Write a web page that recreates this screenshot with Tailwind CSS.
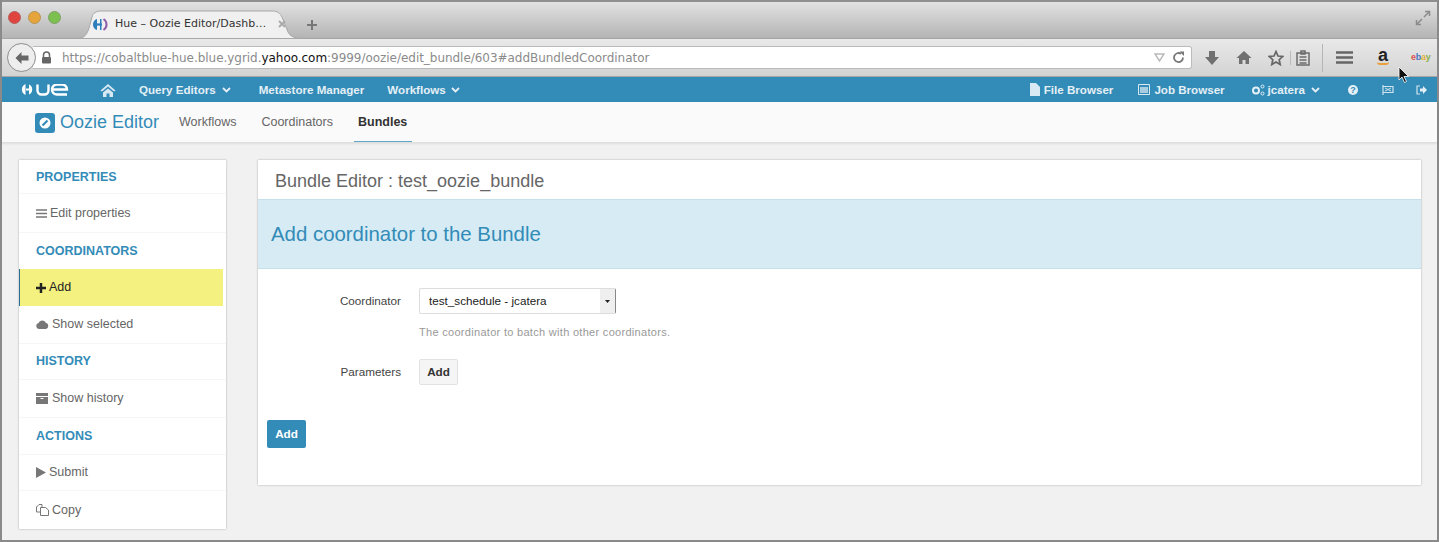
<!DOCTYPE html>
<html lang="en">
<head>
  <meta charset="UTF-8" />
  <title>Hue - Oozie Editor</title>
  <script src="https://cdn.jsdelivr.net/npm/@tailwindcss/browser@4"></script>
</head>
<body class="w-[1439px] h-[542px] overflow-hidden relative bg-[#f1f1f1] font-['Liberation_Sans',sans-serif] text-[#666]">
  <div class="h-full flex flex-col border-x-2 border-b-2 border-[#8a8a8a]">

    <!-- browser tab strip -->
    <div class="h-[38px] shrink-0 flex items-end border-t-2 border-[#8f8f8f] bg-gradient-to-b from-[#e2e2e2] to-[#b4b4b4] relative pl-[6px]">
      <div class="flex gap-[7px] h-[36px] pt-[9px] w-[76px]">
        <span class="w-[13px] h-[13px] rounded-full bg-[#e0443e] border border-[#b5605c]"></span>
        <span class="w-[13px] h-[13px] rounded-full bg-[#e5a53a] border border-[#b89455]"></span>
        <span class="w-[13px] h-[13px] rounded-full bg-[#7cc04f] border border-[#7f9f66]"></span>
      </div>
      <div class="h-[28px] w-[216px] -ml-[1px] relative flex items-center pl-[9px] gap-[7px] font-['DejaVu_Sans',sans-serif] text-[#333]">
        <svg width="228" height="29" viewBox="0 0 228 29" class="absolute -left-[6px] top-0"><path d="M0 28.500C8 28.500 10 24 12 18L15 7C16 3 19 1 24 1H196C200 1 203 3 205 7L211 22C213 26 217 28.500 226 28.500Z" fill="#f0f0f0" stroke="#a8a8a8"/></svg>
        <svg width="16" height="15" viewBox="0 0 16 15" class="shrink-0 relative"><path d="M1 7.500A6 6 0 0 1 5 2V13A6 6 0 0 1 1 7.500Z" fill="#2d7fbc"/><rect x="5" y="6.400" width="5" height="2.200" fill="#2d7fbc"/><path d="M8 2h1.500v11H8Z" fill="#2d7fbc"/><path d="M11.500 2A6.500 6.500 0 0 1 11.500 13" fill="none" stroke="#8e5ea8" stroke-width="2"/></svg>
        <span class="whitespace-nowrap text-[11px] relative">Hue – Oozie Editor/Dashb…</span>
        <svg width="8" height="8" viewBox="0 0 8 8" class="relative ml-[5px]"><path d="M1 1l6 6M7 1l-6 6" stroke="#aaa" stroke-width="2"/></svg>
      </div>
      <svg width="12" height="12" viewBox="0 0 12 12" class="ml-[7px] mb-[7px]"><path d="M6 1v10M1 6h10" stroke="#777" stroke-width="2"/></svg>
      <svg width="16" height="16" viewBox="0 0 16 16" class="absolute right-[6px] top-[8px]"><path d="M9 7l5-5M10 1.500h4.500V6M7 9l-5 5M6 14.500H1.500V10" fill="none" stroke="#8b8b8b" stroke-width="1.500"/></svg>
    </div>

    <!-- browser toolbar -->
    <div class="h-[39px] shrink-0 flex items-center bg-gradient-to-b from-[#e9e9e9] to-[#d3d3d3] border-y border-[#a5a5a5]">
      <div class="relative z-10 ml-[5px] w-[29px] h-[29px] rounded-full bg-[#eee] border border-[#8c8c8c] flex items-center justify-center shrink-0">
        <svg width="16" height="14" viewBox="0 0 16 14"><path d="M7.500 1L1.500 7l6 6V9.500h7v-5h-7z" fill="#666"/></svg>
      </div>
      <div class="-ml-[3px] w-[1159px] h-[23px] shrink-0 bg-white rounded-r-[3px] border border-l-0 border-[#bbb] flex items-center pl-[8px] pr-[6px] font-['DejaVu_Sans',sans-serif] text-[#8b8b8b]">
        <svg width="11" height="13" viewBox="0 0 11 13" class="mr-[10px] shrink-0"><path d="M2.500 6V4a3 3 0 0 1 6 0v2" fill="none" stroke="#666" stroke-width="1.500"/><rect x="1" y="6" width="9" height="6.500" rx="1" fill="#666"/></svg>
        <span class="whitespace-nowrap text-[12px] tracking-[-0.04px]">https://cobaltblue-hue.blue.ygrid.<span class="text-[#111]">yahoo.com</span>:9999/oozie/edit_bundle/603#addBundledCoordinator</span>
        <svg width="11" height="9" viewBox="0 0 11 9" class="ml-auto mr-[7px]"><path d="M1 1h9L5.500 8z" fill="none" stroke="#bbb" stroke-width="1.500"/></svg>
        <svg width="13" height="13" viewBox="0 0 13 13"><path d="M11 6.500A4.500 4.500 0 1 1 9 2.800" fill="none" stroke="#777" stroke-width="1.800"/><path d="M7.500.5l4.500 0v4.500z" fill="#777"/></svg>
      </div>
      <div class="flex items-center ml-[12px]">
        <svg width="16" height="16" viewBox="0 0 16 16"><path d="M5 1h6v6h4l-7 8-7-8h4z" fill="#707070"/></svg>
        <svg width="16" height="15" viewBox="0 0 16 15" class="ml-[16px]"><path d="M8 1L.5 8H3v6h3.500v-4h3v4H13V8h2.500z" fill="#707070"/></svg>
        <svg width="16" height="16" viewBox="0 0 16 16" class="ml-[16px]"><path d="M8 1.500l2 4.500 4.800.5-3.600 3.200 1 4.800L8 12l-4.200 2.500 1-4.800L1.200 6.500 6 6z" fill="none" stroke="#666" stroke-width="1.700"/></svg>
        <span class="w-px h-[14px] bg-[#bbb] ml-[6px]"></span>
        <svg width="14" height="16" viewBox="0 0 14 16" class="ml-[5px]"><path d="M1 3h12v12H1zM5 1h4v3H5zM3.500 7h7M3.500 10h7M3.500 13h7" fill="none" stroke="#6c6c6c" stroke-width="1.500"/></svg>
        <span class="w-px h-[28px] bg-[#b5b5b5] ml-[12px]"></span>
        <svg width="17" height="13" viewBox="0 0 17 13" class="ml-[13px]"><path d="M0 1.500h17M0 6.500h17M0 11.500h17" stroke="#666" stroke-width="2.500"/></svg>
        <span class="ml-[23px] w-[14px] flex flex-col items-center leading-none relative -top-[1px]">
          <span class="text-[18px] font-bold text-[#222] leading-[14px]">a</span>
          <span class="w-[12px] h-[3px] rounded-b-full border-b-2 border-[#e8a13a]"></span>
        </span>
        <span class="ml-[21px] text-[9px] font-bold tracking-[-0.3px] leading-none"><span class="text-[#d9534f]">e</span><span class="text-[#4a76c0]">b</span><span class="text-[#e0b23a]">a</span><span class="text-[#8ab04a]">y</span></span>
      </div>
    </div>

    <!-- hue navbar -->
    <div class="h-[25px] shrink-0 bg-[#338bb8] flex items-center text-[#e4f0f6] text-[11.600px] font-bold pl-[18px] pr-[10px]">
      <span class="flex items-center w-[52px] gap-[1px] leading-none">
        <svg width="15" height="13" viewBox="0 0 15 13"><path d="M5.500 1A6 6 0 0 0 5.500 12zM6 5.500h3v2H6zM9 1.500a5.500 5.500 0 0 1 0 10z" fill="#fff"/></svg>
        <svg width="33" height="12" viewBox="0 0 33 12"><path d="M1.500 0.500V6.500A4 4 0 0 0 5.500 10.500h3A4 4 0 0 0 12.500 6.500V0.500M31 10.500H21A5 5 0 0 1 21 0.500h5A5 5 0 0 1 31 5.500H17" fill="none" stroke="#fff" stroke-width="2.400"/></svg>
      </span>
      <svg width="16" height="14" viewBox="0 0 16 14" class="ml-[28px]"><path d="M8 1L.5 7.500 2 8.500l6-5 6 5 1.500-1zM3 9.500l5-4 5 4V14H9.500v-3.500h-3V14H3z" fill="#d8e9f3"/></svg>
      <span class="ml-[23px] whitespace-nowrap">Query Editors</span>
      <svg width="9" height="6" viewBox="0 0 9 6" class="ml-[6px]"><path d="M1 1l3.500 3.500L8 1" fill="none" stroke="#e4f0f6" stroke-width="1.800"/></svg>
      <span class="ml-[28px] whitespace-nowrap">Metastore Manager</span>
      <span class="ml-[23px] whitespace-nowrap">Workflows</span>
      <svg width="9" height="6" viewBox="0 0 9 6" class="ml-[5px]"><path d="M1 1l3.500 3.500L8 1" fill="none" stroke="#e4f0f6" stroke-width="1.800"/></svg>

      <svg width="10" height="13" viewBox="0 0 10 13" class="ml-auto"><path d="M0 0h6l4 4v9H0z" fill="#d8e9f3"/></svg>
      <span class="ml-[4px] whitespace-nowrap">File Browser</span>
      <svg width="12" height="11" viewBox="0 0 12 11" class="ml-[25px]"><path d="M.5.500h11v10H.5z" fill="none" stroke="#d8e9f3"/><path d="M2 3h8v6H2z" fill="#a9cde0"/></svg>
      <span class="ml-[4px] whitespace-nowrap">Job Browser</span>
      <svg width="14" height="12" viewBox="0 0 14 12" class="ml-[26px]"><circle cx="5" cy="6.500" r="3" fill="none" stroke="#e4f0f6" stroke-width="2"/><circle cx="11.500" cy="2.500" r="1.500" fill="none" stroke="#e4f0f6"/><circle cx="11.500" cy="9.500" r="1.500" fill="none" stroke="#e4f0f6"/></svg>
      <span class="ml-[3px] whitespace-nowrap">jcatera</span>
      <svg width="9" height="6" viewBox="0 0 9 6" class="ml-[6px]"><path d="M1 1l3.500 3.500L8 1" fill="none" stroke="#e4f0f6" stroke-width="1.800"/></svg>
      <span class="ml-[28px] w-[10px] h-[10px] rounded-full bg-[#e4f0f6] text-[#338bb8] text-[9px] leading-[10px] text-center">?</span>
      <svg width="12" height="10" viewBox="0 0 12 10" class="ml-[24px]"><path d="M1 0v10M1 1.500h10v6H1" fill="none" stroke="#cfe3ee" stroke-width="1.200"/><path d="M3 3l6 3M9 3l-6 3" stroke="#cfe3ee"/></svg>
      <svg width="11" height="10" viewBox="0 0 11 10" class="ml-[22px]"><path d="M4 1H1v8h3" fill="none" stroke="#cfe3ee" stroke-width="1.200"/><path d="M4 3.500h3V1l4 4-4 4V6.500H4z" fill="#e4f0f6"/></svg>
    </div>

    <!-- sub navbar -->
    <div class="h-[41px] shrink-0 pt-[1px] bg-[#fafafa] border-b border-[#dedede] shadow-[0_1px_2px_rgba(0,0,0,0.08)] flex items-stretch pl-[33px]">
      <div class="flex items-center w-[144px]">
        <span class="w-[20px] h-[20px] rounded-[3px] bg-[#338bb8] flex items-center justify-center shrink-0">
          <svg width="12" height="12" viewBox="0 0 12 12"><circle cx="6" cy="6" r="5.500" fill="#fff"/><path d="M3.500 8.500L8.500 3.500" stroke="#338bb8" stroke-width="2.200"/></svg>
        </span>
        <span class="ml-[5px] text-[18px] text-[#338bb8] whitespace-nowrap">Oozie Editor</span>
      </div>
      <div class="flex items-center text-[12.500px] text-[#666]"><span>Workflows</span></div>
      <div class="flex items-center text-[12.500px] text-[#666] ml-[25px]"><span>Coordinators</span></div>
      <div class="flex items-center text-[12.500px] font-bold text-[#333] ml-[25px] relative"><span>Bundles</span><span class="absolute left-[-4px] right-[-5px] bottom-0 h-[1px] bg-[#5fa6c7]"></span></div>
    </div>

    <!-- page body -->
    <div class="flex-1 flex items-start pl-[17px] pt-[17px]">

      <!-- sidebar -->
      <div class="w-[207px] h-[369px] shrink-0 bg-white shadow-[0_0_2px_rgba(0,0,0,0.3)] text-[12.500px] pt-[6px] flex flex-col">
        <div class="h-[28px] pl-[17px] flex items-start pt-[2px] font-bold text-[#338bb8] border-b border-[#f6f6f6]">PROPERTIES</div>
        <div class="h-[39px] pl-[17px] flex items-center gap-[3px] border-b border-[#f6f6f6]">
          <svg width="11" height="9" viewBox="0 0 11 9"><path d="M0 1h11M0 4.500h11M0 8h11" stroke="#777" stroke-width="1.500"/></svg><span>Edit properties</span>
        </div>
        <div class="h-[36px] pl-[17px] flex items-center font-bold text-[#338bb8]">COORDINATORS</div>
        <div class="h-[37px] mr-[3px] pl-[16px] flex items-center gap-[3px] bg-[#f5f180] border-l border-[#2a6f8f] text-[#222]">
          <svg width="10" height="10" viewBox="0 0 10 10"><path d="M5 0v10M0 5h10" stroke="#222" stroke-width="2.500"/></svg><span>Add</span>
        </div>
        <div class="h-[38px] pl-[17px] flex items-center gap-[3px] border-b border-[#f6f6f6]">
          <svg width="13" height="9" viewBox="0 0 13 9"><path d="M3 9a3 3 0 0 1-.5-5.900A4 4 0 0 1 9.800 2.800 3.200 3.200 0 0 1 10 9z" fill="#777"/></svg><span>Show selected</span>
        </div>
        <div class="h-[36px] pl-[17px] flex items-center font-bold text-[#338bb8] border-b border-[#f6f6f6]">HISTORY</div>
        <div class="h-[38px] pl-[17px] flex items-center gap-[4px] border-b border-[#f6f6f6]">
          <svg width="12" height="11" viewBox="0 0 12 11"><path d="M0 0h12v3H0zM0 4h12v7H0z" fill="#777"/><path d="M4.500 5.500h3" stroke="#fff"/></svg><span>Show history</span>
        </div>
        <div class="h-[37px] pl-[17px] flex items-center font-bold text-[#338bb8] border-b border-[#f6f6f6]">ACTIONS</div>
        <div class="h-[36px] pl-[17px] flex items-center gap-[3px] border-b border-[#f6f6f6]">
          <svg width="10" height="11" viewBox="0 0 10 11"><path d="M0 0l10 5.500L0 11z" fill="#777"/></svg><span>Submit</span>
        </div>
        <div class="h-[38px] pl-[17px] flex items-center gap-[3px]">
          <svg width="13" height="12" viewBox="0 0 13 12"><path d="M4 8H.5V3L3 .5h3V3M4.500 3.500H9.500l3 2.500v5.500h-8z" fill="none" stroke="#777"/></svg><span>Copy</span>
        </div>
      </div>

      <!-- main card -->
      <div class="ml-[32px] w-[1163px] h-[325px] bg-white shadow-[0_0_2px_rgba(0,0,0,0.3)] flex flex-col">
        <div class="h-[39px] pl-[17px] flex items-center text-[18px] text-[#666] pt-[4px]">Bundle Editor : test_oozie_bundle</div>
        <div class="h-[70px] pl-[13px] flex items-center text-[20.400px] text-[#338bb8] bg-[#d6ebf4] border-y border-[#c5dfeb]">Add coordinator to the Bundle</div>
        <div class="flex items-center mt-[19px] text-[11.700px]">
          <span class="w-[143px] text-right text-[#444]">Coordinator</span>
          <div class="ml-[18px] w-[197px] h-[26px] bg-white border border-[#ddd] border-r-[#888] rounded-[2px] flex items-center pl-[9px] text-[#222]">
            <span>test_schedule - jcatera</span>
            <span class="ml-auto w-[15px] h-full bg-[#efefef] flex items-center justify-center">
              <svg width="5" height="3" viewBox="0 0 5 3"><path d="M0 0h5L2.500 3z" fill="#222"/></svg>
            </span>
          </div>
        </div>
        <div class="ml-[161px] mt-[10px] text-[11px] tracking-[0.3px] text-[#999]">The coordinator to batch with other coordinators.</div>
        <div class="flex items-center mt-[18px] text-[11.700px]">
          <span class="w-[143px] text-right text-[#444]">Parameters</span>
          <span class="ml-[18px] w-[39px] h-[26px] bg-[#f5f5f5] border border-[#e2e2e2] rounded-[2px] flex items-center justify-center font-bold text-[#333]">Add</span>
        </div>
        <span class="ml-[9px] mt-[35px] w-[39px] h-[28px] bg-[#338bb8] rounded-[2px] flex items-center justify-center text-[11.700px] font-bold text-white">Add</span>
      </div>
    </div>
  </div>

  <!-- mouse pointer -->
  <svg width="12" height="18" viewBox="0 0 12 18" class="absolute left-[1398px] top-[66px]"><path d="M1 1v13l3-3 2.500 5.500 2-1L6 10.500h4.500z" fill="#111" stroke="#fff" stroke-width="0.800"/></svg>
</body>
</html>
